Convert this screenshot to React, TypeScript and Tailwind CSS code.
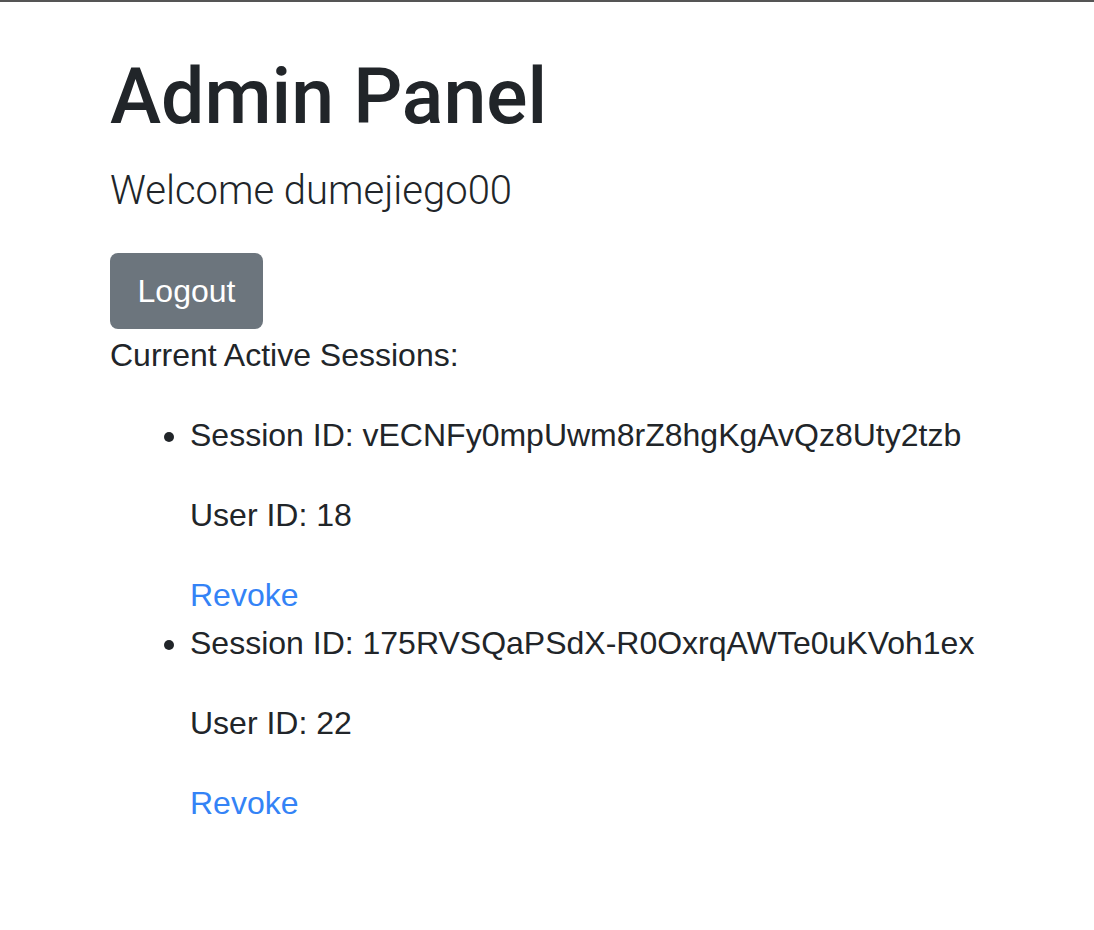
import React from "react";

const sessions = [
  { id: "vECNFy0mpUwm8rZ8hgKgAvQz8Uty2tzb", userId: 18 },
  { id: "175RVSQaPSdX-R0OxrqAWTe0uKVoh1ex", userId: 22 },
];

export default function App() {
  return (
    <div
      className="min-h-[930px] border-t-2 border-[#555555] bg-white text-[#212529]"
      style={{ fontFamily: '"Liberation Sans", Arial, sans-serif' }}
    >
      <div className="pl-[110px] pt-[50px]">
        <h1 className="mb-[19px] font-['Roboto',sans-serif] text-[77px] leading-[90px] font-medium">
          Admin Panel
        </h1>
        <p className="mb-[32px] font-['Roboto',sans-serif] text-[40px] leading-[60px] font-light">
          Welcome dumejiego00
        </p>

        <button className="h-[76px] w-[153px] rounded-[8px] bg-[#6c757d] text-[32px] leading-[48px] text-white">
          Logout
        </button>

        <p className="mt-[2px] mb-[32px] text-[32px] leading-[48px]">Current Active Sessions:</p>

        <ul className="list-disc pl-[80px] text-[32px] leading-[48px]">
          {sessions.map((s) => (
            <li key={s.id}>
              <p className="mb-[32px]">Session ID: {s.id}</p>
              <p className="mb-[32px]">User ID: {s.userId}</p>
              <a href="#" className="text-[#3483f6]">
                Revoke
              </a>
            </li>
          ))}
        </ul>
      </div>
    </div>
  );
}
